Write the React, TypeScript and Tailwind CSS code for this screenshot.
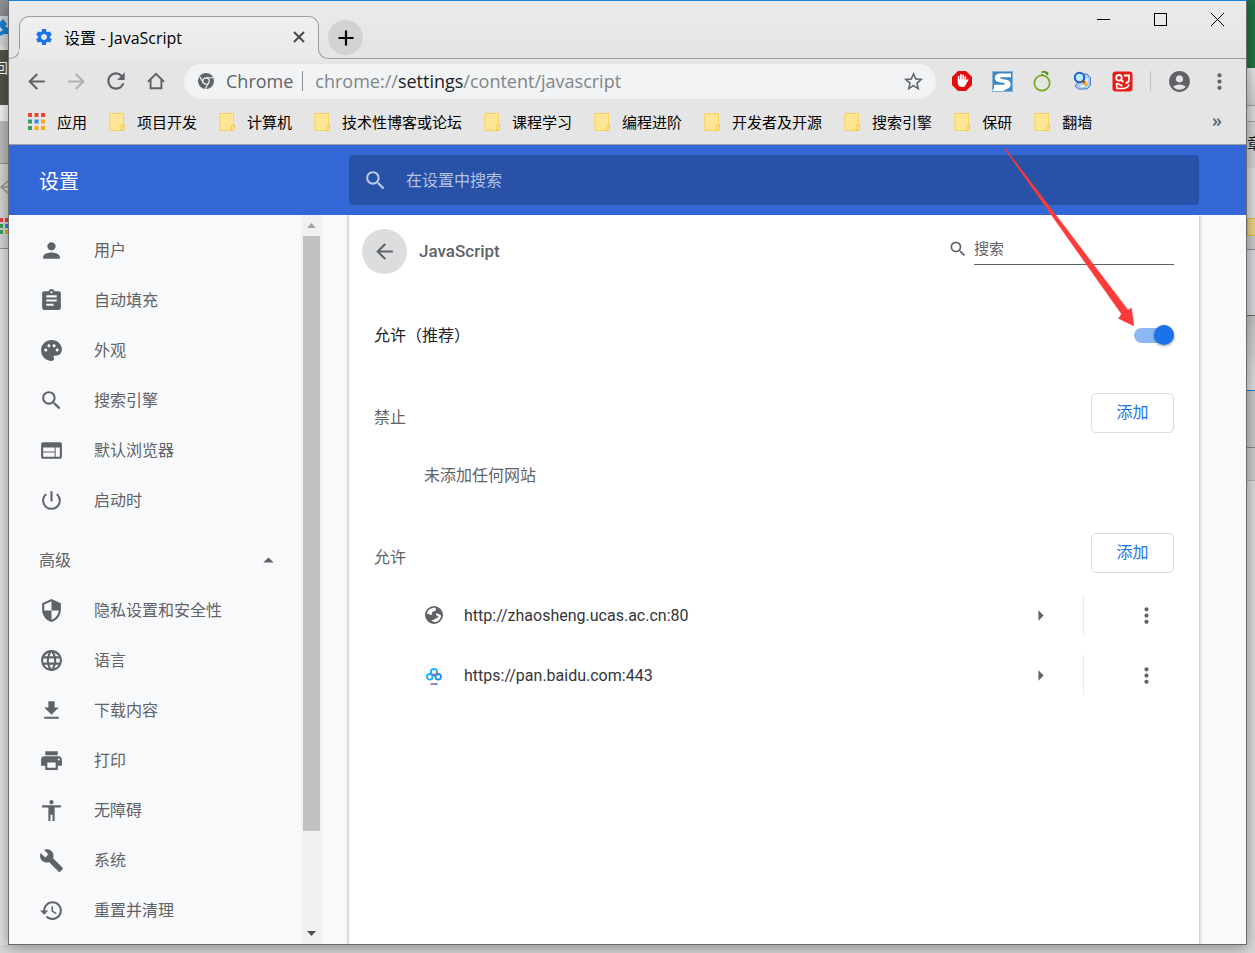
import type { ReactNode } from "react";
import {
  MdAccessibility,
  MdAccountCircle,
  MdArrowBack,
  MdArrowDropUp,
  MdArrowForward,
  MdArrowRight,
  MdAssignment,
  MdBuild,
  MdGetApp,
  MdLanguage,
  MdMoreVert,
  MdPalette,
  MdPerson,
  MdPowerSettingsNew,
  MdPrint,
  MdRefresh,
  MdSearch,
  MdSecurity,
  MdSettings,
  MdStarBorder,
  MdWeb,
} from "react-icons/md";

const uiFont = "font-['Open_Sans','Noto_Sans_CJK_SC',sans-serif]";

const bookmarks = [
  "项目开发",
  "计算机",
  "技术性博客或论坛",
  "课程学习",
  "编程进阶",
  "开发者及开源",
  "搜索引擎",
  "保研",
  "翻墙",
];

const HistoryIcon = () => (
  <svg viewBox="0 0 24 24" className="size-[25px]" fill="currentColor">
    <path d="M13 3c-4.97 0-9 4.03-9 9H1l4 3.99L9 12H6c0-3.87 3.13-7 7-7s7 3.13 7 7-3.13 7-7 7c-1.93 0-3.68-.79-4.94-2.06l-1.42 1.42C8.27 19.99 10.51 21 13 21c4.97 0 9-4.03 9-9s-4.03-9-9-9zm-1 5v5l4.28 2.54.72-1.21-3.5-2.08V8H12z" />
  </svg>
);

const basicItems = [
  { label: "用户", icon: <MdPerson size={25} /> },
  { label: "自动填充", icon: <MdAssignment size={25} /> },
  { label: "外观", icon: <MdPalette size={25} /> },
  { label: "搜索引擎", icon: <MdSearch size={25} /> },
  { label: "默认浏览器", icon: <MdWeb size={25} /> },
  { label: "启动时", icon: <MdPowerSettingsNew size={25} /> },
];

const advancedItems = [
  { label: "隐私设置和安全性", icon: <MdSecurity size={25} /> },
  { label: "语言", icon: <MdLanguage size={25} /> },
  { label: "下载内容", icon: <MdGetApp size={25} /> },
  { label: "打印", icon: <MdPrint size={25} /> },
  { label: "无障碍", icon: <MdAccessibility size={25} /> },
  { label: "系统", icon: <MdBuild size={25} /> },
  { label: "重置并清理", icon: <HistoryIcon /> },
];

const FolderIcon = () => (
  <svg viewBox="0 0 16 18" className="h-[18px] w-4 shrink-0">
    <path d="M.8.5h13.700v17H.8z" fill="#ffe694" stroke="#f5d25c" />
    <path d="M13 12.200h2.300v4l-1 1.300h-2v-4z" fill="#ffe694" stroke="#f0c53c" />
  </svg>
);

const AppsIcon = () => (
  <svg viewBox="0 0 17 17" className="size-[17px] shrink-0">
    <path d="M0 0h4v4H0zM6.5 0h4v4h-4zM13 0h4v4h-4z" fill="#ea4335" />
    <path d="M0 6.5h4v4H0z" fill="#34a05a" />
    <path d="M6.5 6.5h4v4h-4z" fill="#2b8cee" />
    <path d="M13 6.5h4v4h-4zM6.5 13h4v4h-4zM13 13h4v4h-4z" fill="#fba919" />
    <path d="M0 13h4v4H0z" fill="#34a05a" />
  </svg>
);

const ChromeIcon = () => (
  <svg viewBox="0 0 16 16" className="size-4 shrink-0">
    <circle cx="8" cy="8" r="8" fill="#5f6368" />
    <circle cx="8" cy="8" r="3.2" fill="#5f6368" stroke="#f1f3f4" strokeWidth="1.2" />
    <path d="M8 4.8h7.2M5.2 9.6L1.6 3.4M10.8 9.6L7.2 15.8" stroke="#f1f3f4" strokeWidth="1.1" />
  </svg>
);

const HomeIcon = () => (
  <svg viewBox="0 0 20 20" className="size-5" fill="none" stroke="currentColor" strokeWidth="1.900">
    <path d="M2 10.700L10 2.800l8 7.900M4.600 9v8.200h10.800V9" />
  </svg>
);

const BlockerIcon = () => (
  <svg viewBox="0 0 20 20" className="size-5">
    <path d="M6 0h8l6 6v8l-6 6H6l-6-6V6z" fill="#e40d0d" />
    <path
      d="M6.6 10V5.6M8.9 9V3.9M11.2 9V4.3M13.4 10V6"
      stroke="#fff"
      strokeWidth="1.7"
      strokeLinecap="round"
    />
    <path d="M5.800 8.500h8.400v.8l1.700-1.200c.9 0 .7.8.4 1.100l-3 5.200c-.6 1-1.500 1.600-3 1.600-2.800 0-4.500-1.500-4.500-4z" fill="#fff" />
  </svg>
);

const StylishIcon = () => (
  <svg viewBox="0 0 21 21" className="size-[21px]">
    <path d="M.5.5h20v20H.5z" fill="#3f87c0" stroke="#83b3d9" />
    <path
      d="M19 2.500v3.700H9.500c-1.600 0-1.600 1.700 0 1.900l5 .6c6 .8 5.500 9.300-1 9.300H2v-4.300h9.500c1.800 0 1.800-1.700 0-1.900l-4.500-.6C1 10.400 1.500 2.500 8 2.500z"
      fill="#fff"
    />
    <path d="M1 18h14l-4 2H1z" fill="#fff" />
  </svg>
);

const LimeIcon = () => (
  <svg viewBox="0 0 20 22" className="h-[22px] w-5" fill="none">
    <circle cx="10" cy="13" r="7.700" stroke="#76a81c" strokeWidth="1.700" />
    <path d="M10.500 5.500V4M9.500 2.500c3-1.500 5-1 6.500 1.500" stroke="#5f9a1a" strokeWidth="1.700" />
    <path d="M12 2l4.500 1-1 2.500z" fill="#3f8a1c" />
  </svg>
);

const LookupIcon = () => (
  <svg viewBox="0 0 20 20" className="size-5" fill="none">
    <path d="M12 3h3l3.500 4v7.500L15 18H6.500L3 15z" fill="#a9cdf5" stroke="#4674c8" />
    <path d="M14.500 7v7l-6 1.500" stroke="#e8f2ff" strokeWidth="2" />
    <circle cx="7.500" cy="6.500" r="4.700" fill="#b9ecff" stroke="#1f5fd0" strokeWidth="2" />
    <path d="M11 10l4 4.500" stroke="#f2a516" strokeWidth="3" />
    <path d="M10.500 9.500l2 2.200" stroke="#8a4a12" strokeWidth="2.500" />
  </svg>
);

const RedAppIcon = () => (
  <svg viewBox="0 0 21 21" className="size-[21px]" fill="none">
    <rect x=".5" y=".5" width="20" height="20" rx="3" fill="#ea1c14" />
    <circle cx="7" cy="6.800" r="2.800" stroke="#fff" strokeWidth="1.800" />
    <path d="M9 9l2.500 2M12 4.500h5v4.500c0 2-1.500 2.800-3.500 2.800" stroke="#fff" strokeWidth="1.800" />
    <path d="M4.500 12l.5 5.500h7l3.500-1.500 1.500-2.500M5.500 12.500l5 2.500" stroke="#fff" strokeWidth="1.600" />
  </svg>
);

const SiteIcon = () => (
  <svg viewBox="0 0 18 18" className="size-[18px]">
    <circle cx="9" cy="9" r="9" fill="#5f6368" />
    <path
      d="M2 7.800c2.200.2 3 1.200 5 1 .6-1.600-.6-2 .4-3 1.400-.6 2.600-.4 3.400-1.800.4-.8.2-1.600-.6-2.100C6 1.500 2.500 4 2 7.800z"
      fill="#fff"
    />
    <path
      d="M16 9.500c-1.500-.9-2.600-2.300-4.400-1.900-1 .2-.8 1.600.2 1.900 1 .3 1.600.4 1.300 1.500-.5 1.400-2 1-3 1.800-.8.7-1.500 1.500-3.400 1.300-.4.7 1.600 2.200 3.300 2 3.500-.4 5.900-3 6-6.600z"
      fill="#fff"
    />
  </svg>
);

const BaiduPanIcon = () => (
  <svg viewBox="0 0 20 20" className="size-5" fill="none">
    <rect x=".5" y=".5" width="19" height="19" rx="2" fill="#fff" stroke="#f5f5f5" />
    <circle cx="10" cy="7.200" r="3.200" stroke="#1fb4f8" strokeWidth="1.800" />
    <path d="M6.900 7.800a3.200 3.200 0 0 0 6.200 0" stroke="#ef3b57" strokeWidth="1.800" />
    <circle cx="5.800" cy="11.800" r="2.800" stroke="#12b4f5" strokeWidth="1.800" />
    <circle cx="14.200" cy="11.800" r="2.800" stroke="#1791f6" strokeWidth="1.800" />
    <path d="M6.500 19H10" stroke="#ef3b57" strokeWidth="1.500" />
    <path d="M10 19h3.500" stroke="#2b6cf0" strokeWidth="1.500" />
  </svg>
);

const sites = [
  { url: "http://zhaosheng.ucas.ac.cn:80", icon: <SiteIcon /> },
  { url: "https://pan.baidu.com:443", icon: <BaiduPanIcon /> },
];

const ToolButton = ({ label, children }: { label: string; children: ReactNode }) => (
  <button aria-label={label} className="flex h-9 w-10 shrink-0 items-center justify-center">
    {children}
  </button>
);

const TabStrip = () => (
  <div className="flex h-[58px] items-end pt-[15px]">
    <div className="h-[10px] w-[11px] rounded-br-[10px] border-r border-b border-[#9c9c9c]" />
    <div className="-ml-px h-full w-[300px] rounded-t-[10px] bg-linear-to-b from-[#f0f0f0] to-[#e9e9e9]">
      <div className="flex h-[33px] items-start rounded-t-[10px] border-x border-t border-[#9c9c9c] pt-[10px] pr-[9px] pl-[14px]">
        <MdSettings size={20} className="shrink-0 text-[#1a73e8]" />
        <span className="ml-[10px] flex-1 text-base leading-[22px] text-black">设置 - JavaScript</span>
        <button aria-label="关闭标签页" className="flex size-5 items-center justify-center">
          <svg viewBox="0 0 12 12" className="size-3" stroke="#45484c" strokeWidth="2">
            <path d="M1 1l10 10M11 1L1 11" />
          </svg>
        </button>
      </div>
    </div>
    <div className="-ml-px h-[10px] w-[10px] rounded-bl-[10px] border-b border-l border-[#9c9c9c]" />
    <div className="flex h-full flex-1 border-b border-[#9c9c9c]">
      <button aria-label="新标签页" className="mt-1 flex size-[35px] items-center justify-center rounded-full bg-[#d2d2d2]">
        <svg viewBox="0 0 16 16" className="size-4" stroke="#000" strokeWidth="2.200">
          <path d="M8 .5v15M.5 8h15" />
        </svg>
      </button>
      <div className="flex-1" />
      <div className="-mt-[15px] flex h-[37px] items-center">
        <button aria-label="最小化" className="flex w-[57px] justify-center">
          <span className="h-px w-[13px] bg-black" />
        </button>
        <button aria-label="最大化" className="flex w-[57px] justify-center">
          <span className="size-[13px] border border-black" />
        </button>
        <button aria-label="关闭" className="flex w-[57px] justify-center">
          <svg viewBox="0 0 13 13" className="size-[13px]" stroke="#000">
            <path d="M0 0l13 13M13 0L0 13" />
          </svg>
        </button>
      </div>
    </div>
  </div>
);

const Toolbar = () => (
  <div className="flex h-11 items-center px-[7px] text-[#5f6368]">
    <ToolButton label="后退">
      <MdArrowBack size={25} />
    </ToolButton>
    <ToolButton label="前进">
      <MdArrowForward size={25} className="text-[#b0b2b4]" />
    </ToolButton>
    <ToolButton label="重新加载">
      <MdRefresh size={26} />
    </ToolButton>
    <ToolButton label="主页">
      <HomeIcon />
    </ToolButton>
    <div className="ml-2 flex h-[35px] flex-1 items-center rounded-full bg-[#f1f3f4] pr-[11px] pl-[14px] text-lg leading-[25px]">
      <ChromeIcon />
      <span className="ml-3">Chrome</span>
      <span className="mr-3 ml-[9px] h-5 w-px bg-[#8a8d91]" />
      <span className="flex-1 whitespace-nowrap text-[#80868b]">
        chrome://<span className="text-[#202124]">settings</span>/content/javascript
      </span>
      <button aria-label="为此页添加书签">
        <MdStarBorder size={23} />
      </button>
    </div>
    <div className="ml-[6px] flex items-center">
      <ToolButton label="广告拦截">
        <BlockerIcon />
      </ToolButton>
      <ToolButton label="Stylish">
        <StylishIcon />
      </ToolButton>
      <ToolButton label="代理">
        <LimeIcon />
      </ToolButton>
      <ToolButton label="查找">
        <LookupIcon />
      </ToolButton>
      <ToolButton label="扩展">
        <RedAppIcon />
      </ToolButton>
      <div className="flex w-[17px] justify-center">
        <span className="h-5 w-px bg-[#bdbdbd]" />
      </div>
      <ToolButton label="用户">
        <MdAccountCircle size={25} />
      </ToolButton>
      <ToolButton label="菜单">
        <MdMoreVert size={25} />
      </ToolButton>
    </div>
  </div>
);

const BookmarkBar = () => (
  <div className="flex h-[42px] items-center gap-[22px] border-b border-[#9c9c9c] pr-6 pb-1 pl-[19px] text-[15px] leading-5 text-black">
    <a href="#apps" className="flex shrink-0 items-center gap-3">
      <AppsIcon />
      应用
    </a>
    {bookmarks.map((name) => (
      <a key={name} href="#bookmark" className="flex shrink-0 items-center gap-3">
        <FolderIcon />
        {name}
      </a>
    ))}
    <button aria-label="更多书签" className="ml-auto pb-1 text-lg font-semibold text-[#5f6368]">
      »
    </button>
  </div>
);

const NavItem = ({ label, icon }: { label: string; icon: ReactNode }) => (
  <a href="#section" className="flex h-[50px] items-center gap-[30px] pl-[30px]">
    {icon}
    {label}
  </a>
);

const Sidebar = () => (
  <aside className="flex w-[313px] shrink-0 text-base text-[#5f6368]">
    <nav className="flex-1 overflow-hidden pt-[10px]">
      {basicItems.map((item) => (
        <NavItem key={item.label} {...item} />
      ))}
      <button className="mt-[10px] flex h-[50px] w-full items-center justify-between pr-5 pl-[30px]">
        高级
        <MdArrowDropUp size={25} />
      </button>
      {advancedItems.map((item) => (
        <NavItem key={item.label} {...item} />
      ))}
    </nav>
    <div className="flex w-[21px] flex-col items-center bg-[#f1f1f1]">
      <svg viewBox="0 0 9 5" className="my-2 h-[5px] w-[9px] shrink-0" fill="#a3a3a3">
        <path d="M4.500 0L9 5H0z" />
      </svg>
      <div className="w-[17px] grow-[595] bg-[#c1c1c1]" />
      <div className="grow-[92]" />
      <svg viewBox="0 0 9 5" className="my-2 h-[5px] w-[9px] shrink-0" fill="#505050">
        <path d="M0 0h9L4.500 5z" />
      </svg>
    </div>
  </aside>
);

const SectionHeader = ({ title }: { title: string }) => (
  <div className="flex h-[60px] items-center justify-between pl-[25px]">
    <h2 className="pt-2 text-[#5f6368]">{title}</h2>
    <button className="h-10 w-[83px] rounded-[5px] border border-[#dadce0] pb-[2px] text-[#1a73e8]">添加</button>
  </div>
);

const SettingsCard = () => (
  <main className="flex-1 bg-white pr-[25px] text-base text-[#202124] shadow-[0_1px_3px_1px_rgba(60,64,67,0.3)]">
    <div className="flex h-[72px] items-center pl-[13px] text-[#5f6368]">
      <button aria-label="返回" className="flex size-[45px] items-center justify-center rounded-full bg-[#dcdddf]">
        <MdArrowBack size={25} />
      </button>
      <h1 className="ml-3 flex-1 pt-[2px] font-['Roboto',sans-serif] text-[17px] font-medium">JavaScript</h1>
      <label htmlFor="site-search" className="mr-[6px] pb-1">
        <MdSearch size={20} />
      </label>
      <input
        id="site-search"
        type="text"
        placeholder="搜索"
        className="mb-[6px] h-[33px] w-[200px] border-b border-[#5f6368] text-[15px] outline-none placeholder:text-[#5f6368]"
      />
    </div>
    <div className="mt-[18px] flex h-[60px] items-center justify-between pl-[25px]">
      <label htmlFor="allow-js">允许（推荐）</label>
      <input
        id="allow-js"
        type="checkbox"
        defaultChecked
        className="flex h-[15px] w-10 appearance-none items-center justify-end rounded-full bg-[#8cb8f5] before:size-5 before:rounded-full before:bg-[#1a73e8] before:shadow-[0_1px_3px_rgba(0,0,0,0.4)] before:content-['']"
      />
    </div>
    <section className="mt-[18px]">
      <SectionHeader title="禁止" />
      <p className="flex h-16 items-center pl-[75px] text-[#5f6368]">未添加任何网站</p>
    </section>
    <section className="mt-4">
      <SectionHeader title="允许" />
      <ul className="mt-[2px] pl-[75px]">
        {sites.map((site) => (
          <li key={site.url} className="flex h-[60px] items-center">
            <span className="flex w-5 justify-center">{site.icon}</span>
            <span className="ml-5 flex-1 pt-[2px] font-['Roboto',sans-serif] text-[#333639]">{site.url}</span>
            <button aria-label="网站详情" className="mr-[30px] text-[#5f6368]">
              <MdArrowRight size={25} />
            </button>
            <div className="h-10 w-px bg-[#e8eaed]" />
            <button aria-label="更多操作" className="mr-[15px] ml-[50px] text-[#5f6368]">
              <MdMoreVert size={25} />
            </button>
          </li>
        ))}
      </ul>
    </section>
  </main>
);

const SettingsPage = () => (
  <div className="flex min-h-0 flex-1 flex-col">
    <header className="flex h-[70px] shrink-0 items-center bg-[#3367d6] pr-[47px]">
      <div className="w-[340px] shrink-0 pt-1 pl-[30px] text-xl text-white">设置</div>
      <div className="flex h-[50px] flex-1 items-center gap-[18px] rounded-sm bg-[#2851a8] pl-[14px] text-[#bccbed]">
        <label htmlFor="settings-search">
          <MdSearch size={25} />
        </label>
        <input
          id="settings-search"
          type="text"
          placeholder="在设置中搜索"
          className="flex-1 bg-transparent text-base outline-none placeholder:text-[#b3c2e4]"
        />
      </div>
    </header>
    <div className="flex min-h-0 flex-1 gap-[27px] overflow-hidden bg-[#f8f9fb] pr-[47px]">
      <Sidebar />
      <SettingsCard />
    </div>
  </div>
);

// Slivers of the desktop and the windows behind the browser.
const LeftBackdrop = () => (
  <div className="flex w-2 shrink-0 flex-col overflow-hidden bg-[#e2e3e4] text-sm">
    <div className="h-4 bg-[#8e9296]" />
    <svg viewBox="0 0 8 34" className="h-[34px] w-2 shrink-0">
      <path d="M0 0h8v34L0 28z" fill="#d3d7da" />
      <path d="M0 6l3-3 4 5-2 2 3 2v6H4l-4 2v-4l3-2-3-3z" fill="#1682d4" />
    </svg>
    <div className="flex h-[55px] justify-end bg-[#56524b] pt-2 leading-5 text-white">回</div>
    <div className="h-4 bg-[#f4f4f4]" />
    <div className="h-[42px] bg-[#bdbdbd]" />
    <div className="h-[86px] border-y border-[#8f8f8f] bg-[#d6d6d6] pt-4">
      <svg viewBox="0 0 8 56" className="h-14 w-2">
        <path d="M8 1L1 7l7 6M1 7h7" fill="none" stroke="#999" strokeWidth="1.500" />
        <path d="M0 38h3v4H0zM5 38h3v4H5z" fill="#ea4335" />
        <path d="M0 44h3v4H0z" fill="#34a05a" />
        <path d="M5 44h3v4H5z" fill="#2b8cee" />
        <path d="M0 50h3v4H0z" fill="#34a05a" />
        <path d="M5 50h3v4H5z" fill="#fba919" />
      </svg>
    </div>
    <div className="flex-1" />
  </div>
);

const RightBackdrop = () => (
  <div className="flex w-2 shrink-0 flex-col overflow-hidden bg-[#dcdcdc] text-[15px]">
    <div className="h-[68px] bg-[#217346]" />
    <div className="h-[38px] border-b border-[#a0a0a0] bg-linear-to-b from-[#e9e9e9] to-[#cfcfcf]" />
    <div className="h-4 border-b border-[#a0a0a0] bg-[#dcdcdc]" />
    <div className="flex h-[46px] items-center bg-[#d4d4d4] pb-1 text-[#222]">章</div>
    <div className="h-[50px] bg-[#dedfe1]" />
    <div className="h-[18px] border border-r-0 border-[#e3bb3c] bg-[#eed486]" />
    <div className="h-[14px] border-b border-[#8f8f8f] bg-[#cccccc]" />
    <div className="h-[66px] border-b border-[#6d6d6d] bg-[#d9dadd]" />
    <div className="h-[74px] bg-linear-to-b from-[#c4c4c4] to-[#e2e2e2]" />
    <div className="h-[58px] border-t border-b border-t-[#1883d7] border-b-[#8a8a8a] bg-[#c9c9c9]" />
    <div className="h-[33px] border-b border-[#b5b5b5] bg-[#cfcfcf]" />
    <div className="flex-1" />
  </div>
);

const PointerArrow = () => (
  <svg
    viewBox="0 0 130 178"
    className="pointer-events-none absolute top-[147px] right-[112px] h-[178px] w-[130px]"
    fill="#fb3b3a"
  >
    <path d="M0 0h1l123 162 3.500-2 2.500 18-15.500-7.500 3-4.500z" stroke="#fb3b3a" strokeWidth=".4" />
  </svg>
);

const App = () => {
  return (
    <div className={`flex h-screen min-h-[640px] flex-col overflow-hidden bg-[#dfdfdf] ${uiFont}`}>
      <div className="flex min-h-0 flex-1">
        <LeftBackdrop />
        <div className="relative flex min-w-0 flex-1 flex-col border border-[#6b6b6b] border-t-[#1883d7] bg-linear-to-b from-[#ebebeb] via-[#e5e5e5] via-5% to-[#e5e5e5] shadow-[0_2px_14px_rgba(0,0,0,0.4)]">
          <TabStrip />
          <Toolbar />
          <BookmarkBar />
          <SettingsPage />
          <PointerArrow />
        </div>
        <RightBackdrop />
      </div>
      <div className="h-2 shrink-0 bg-[#d8d8d8]" />
    </div>
  );
};

export default App;
